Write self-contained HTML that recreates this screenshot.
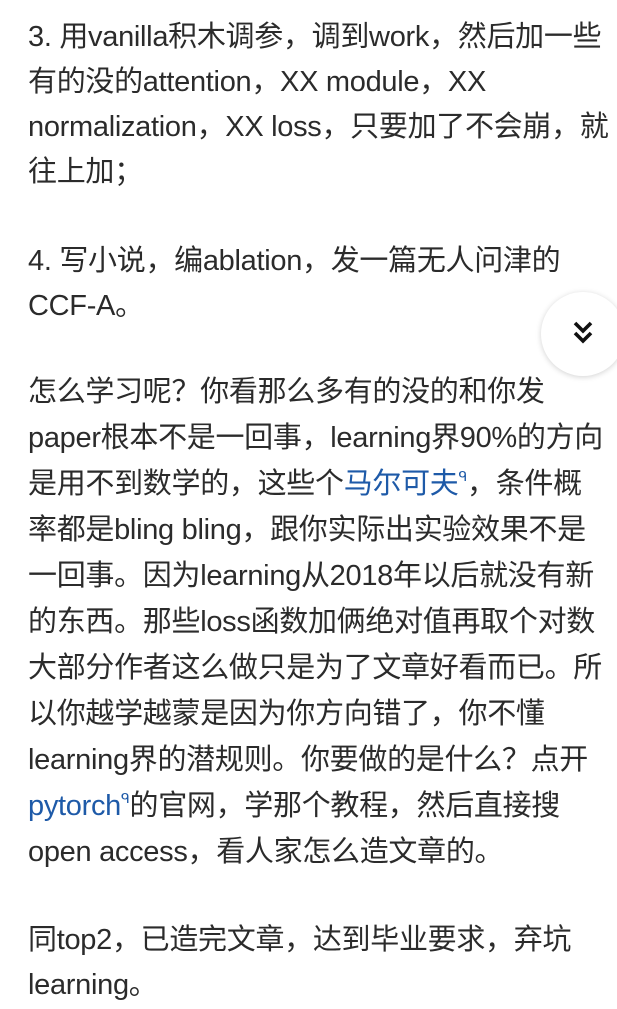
<!DOCTYPE html>
<html><head><meta charset="utf-8"><style>
html,body{margin:0;padding:0;background:#fff;width:617px;height:1009px;overflow:hidden;position:relative}
.l{position:absolute;left:28px;white-space:nowrap;font-family:"Liberation Sans","Noto Sans CJK SC",sans-serif;font-size:29px;color:#2b2b2b;line-height:46px;letter-spacing:-0.3px}
a{color:#1e5aa8;text-decoration:none}
sup{font-size:14px;line-height:0;vertical-align:12px}
.btn{position:absolute;left:541px;top:292px;width:84px;height:84px;border-radius:50%;background:#fff;box-shadow:0 1px 6px rgba(0,0,0,.18)}
</style></head><body>
<div class="l" style="top:14px">3. 用vanilla积木调参，调到work，然后加一些</div>
<div class="l" style="top:59px">有的没的attention，XX module，XX</div>
<div class="l" style="top:104px">normalization，XX loss，只要加了不会崩，就</div>
<div class="l" style="top:149px">往上加；</div>
<div class="l" style="top:238px">4. 写小说，编ablation，发一篇无人问津的</div>
<div class="l" style="top:283px">CCF-A。</div>
<div class="btn"><svg width="84" height="84" viewBox="0 0 84 84"><path d="M34 31l8 8 8-8M34 41l8 8 8-8" fill="none" stroke="#111" stroke-width="3.6"/></svg></div>
<div class="l" style="top:369px">怎么学习呢？你看那么多有的没的和你发</div>
<div class="l" style="top:415px">paper根本不是一回事，learning界90%的方向</div>
<div class="l" style="top:461px">是用不到数学的，这些个<a>马尔可夫<sup>ᑫ</sup></a>，条件概</div>
<div class="l" style="top:507px">率都是bling bling，跟你实际出实验效果不是</div>
<div class="l" style="top:553px">一回事。因为learning从2018年以后就没有新</div>
<div class="l" style="top:599px">的东西。那些loss函数加俩绝对值再取个对数</div>
<div class="l" style="top:645px">大部分作者这么做只是为了文章好看而已。所</div>
<div class="l" style="top:691px">以你越学越蒙是因为你方向错了，你不懂</div>
<div class="l" style="top:737px">learning界的潜规则。你要做的是什么？点开</div>
<div class="l" style="top:783px"><a>pytorch<sup>ᑫ</sup></a>的官网，学那个教程，然后直接搜</div>
<div class="l" style="top:829px">open access，看人家怎么造文章的。</div>
<div class="l" style="top:917px">同top2，已造完文章，达到毕业要求，弃坑</div>
<div class="l" style="top:962px">learning。</div>
</body></html>
